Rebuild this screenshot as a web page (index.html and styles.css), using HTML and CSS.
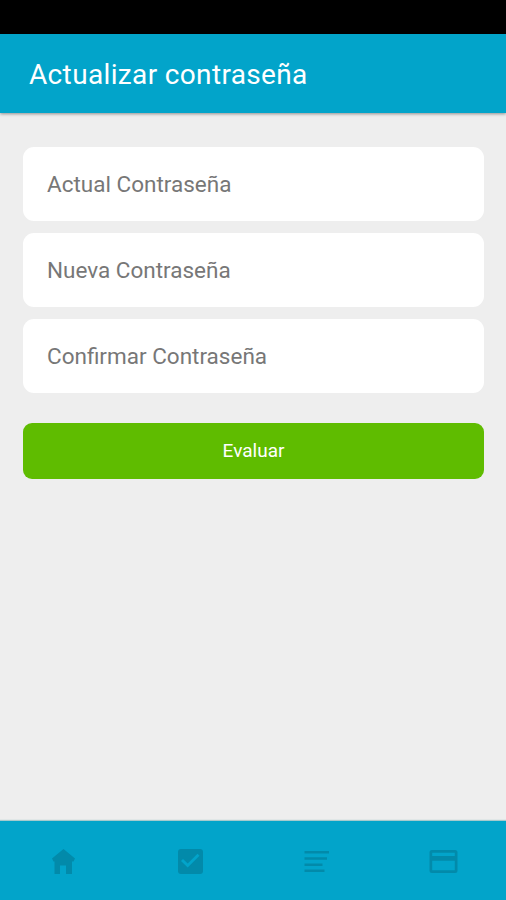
FILE: index.html
```html
<!DOCTYPE html>
<html lang="es">
<head>
    <meta charset="UTF-8">
    <meta name="viewport" content="width=device-width, initial-scale=1.0">
    <title>Actualizar contraseña</title>
    <link rel="stylesheet" href="styles.css">
</head>
<body>
    <div class="status-bar"></div>

    <header class="header">
        <h1>Actualizar contraseña</h1>
    </header>

    <main class="content">
        <form class="password-form">
            <input type="password" placeholder="Actual Contraseña">
            <input type="password" placeholder="Nueva Contraseña">
            <input type="password" placeholder="Confirmar Contraseña">
            <button type="submit">Evaluar</button>
        </form>
    </main>

    <nav class="tab-bar">
        <a class="tab">
            <svg viewBox="0 0 32 32"><path d="M16.500 4L5 13.500l1.500 3H7.500V29h5.500v-8.500h6V29h6V16.500h1.500l1.500-3z"/></svg>
        </a>
        <a class="tab">
            <svg viewBox="0 0 32 32"><path d="M7 4h19a3 3 0 0 1 3 3v19a3 3 0 0 1-3 3H7a3 3 0 0 1-3-3V7a3 3 0 0 1 3-3zm6.700 18.500L25.500 10.800 23.500 8.800 13.700 18.600 9 14 7 16z"/></svg>
        </a>
        <a class="tab">
            <svg viewBox="0 0 32 32"><path d="M4.500 6H29v2.500H4.500zM4.500 12.200H27v2.500H4.500zM4.500 18.400H22.500v2.500H4.500zM4.500 24.600H24.500v2.500H4.500z"/></svg>
        </a>
        <a class="tab">
            <svg viewBox="0 0 32 32"><path fill-rule="evenodd" d="M5 5h23a2.500 2.500 0 0 1 2.500 2.500v18A2.500 2.500 0 0 1 28 28H5a2.500 2.500 0 0 1-2.500-2.500v-18A2.500 2.500 0 0 1 5 5zm.200 2.700v3.300h22.600V7.700zm0 8v9.600h22.600v-9.600z"/></svg>
        </a>
    </nav>
</body>
</html>
```
FILE: styles.css
```css
* {
    box-sizing: border-box;
}

body {
    margin: 0;
    height: 100vh;
    display: flex;
    flex-direction: column;
    font-family: Roboto, sans-serif;
    background-color: #eeeeee;
}

.status-bar {
    height: 34px;
    background-color: #000;
}

.header {
    display: flex;
    align-items: center;
    height: 79px;
    padding: 0 29px;
    background-color: #02a4ca;
    box-shadow: 0 1px 3px rgba(0, 0, 0, 0.4);
}

.header h1 {
    margin: 0;
    padding-top: 1px;
    font-size: 28px;
    font-weight: 400;
    letter-spacing: 0.35px;
    color: white;
}

.content {
    flex: 1;
    padding: 34px 22px 0 23px;
}

.password-form {
    display: flex;
    flex-direction: column;
    gap: 12px;
}

.password-form input {
    height: 74px;
    padding: 0 24px 1px;
    border: none;
    border-radius: 11px;
    background-color: white;
    font-family: inherit;
    font-size: 22.5px;
}

.password-form input::placeholder {
    color: #777;
}

.password-form button {
    height: 56px;
    margin-top: 18px;
    padding-bottom: 3px;
    border: none;
    border-radius: 9px;
    background-color: #5fbc00;
    font-family: inherit;
    font-size: 19px;
    color: white;
}

.tab-bar {
    display: flex;
    height: 79px;
    background-color: #02a4ca;
    box-shadow: 0 -1px 1px rgba(2, 120, 130, 0.3);
}

.tab {
    flex: 1;
    display: flex;
    align-items: center;
    justify-content: center;
}

.tab svg {
    width: 32px;
    height: 32px;
    fill: #028aaa;
}
```
